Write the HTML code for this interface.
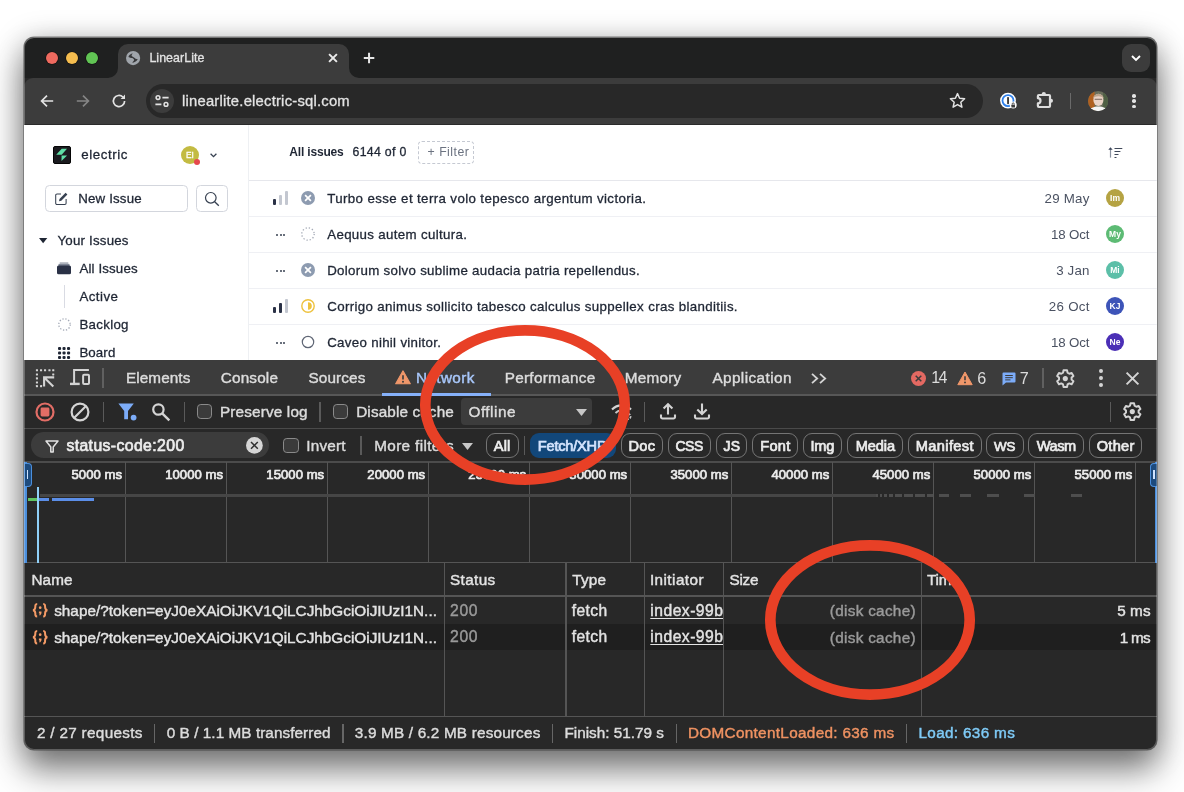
<!DOCTYPE html>
<html lang="en"><head><meta charset="utf-8"><title>LinearLite</title>
<style>
html,body{margin:0;padding:0;}
body{width:1184px;height:792px;background:#fff;overflow:hidden;position:relative;font-family:"Liberation Sans",sans-serif;}
#win{position:absolute;left:24px;top:37px;width:1132.5px;height:713px;border-radius:10px;overflow:hidden;background:#282828;}
#shadow{position:absolute;left:24px;top:37px;width:1132.5px;height:713px;border-radius:10px;box-shadow:0 0 0 0.6px rgba(0,0,0,.45),0 21px 34px rgba(0,0,0,.45),0 4px 30px rgba(0,0,0,.28);}
#rim{position:absolute;left:24px;top:37px;width:1132.5px;height:713px;border-radius:10px;box-shadow:inset 0 0 0 1px rgba(255,255,255,.25),inset 0 1px 0 rgba(255,255,255,.18);pointer-events:none;}
#in{will-change:transform;position:absolute;left:-24px;top:-37px;width:1184px;height:792px;}
.t{position:absolute;white-space:pre;}
.m{-webkit-text-stroke:0.3px;}
.d{-webkit-text-stroke:0.42px;}
.mm{-webkit-text-stroke:0.7px;}
svg{overflow:visible;}
</style></head>
<body>
<div id="shadow"></div>
<div id="win"><div id="in">
<div style="position:absolute;left:24.0px;top:37.0px;width:1133.0px;height:41.0px;background:#1f2020;"></div>
<div style="position:absolute;left:24.0px;top:78.0px;width:1133.0px;height:47.0px;background:#3c3c3c;border-radius:9px 9px 0 0;"></div>
<div style="position:absolute;left:24.0px;top:124.0px;width:1133.0px;height:1.0px;background:#2a2a2a;"></div>
<div style="position:absolute;left:117.5px;top:44.0px;width:231.5px;height:34.0px;background:#3c3c3c;border-radius:10px 10px 0 0;"></div>
<svg style="position:absolute;left:107.5px;top:68px" width="10" height="10"><path d="M10 0V10H0A10 10 0 0 0 10 0Z" fill="#3c3c3c"/></svg>
<svg style="position:absolute;left:349px;top:68px" width="10" height="10"><path d="M0 0V10H10A10 10 0 0 1 0 0Z" fill="#3c3c3c"/></svg>
<div style="position:absolute;left:45.8px;top:52.1px;width:12.4px;height:12.4px;background:#ee6a5f;border-radius:50%;box-shadow:0 0 0 0.6px rgba(0,0,0,.55);"></div>
<div style="position:absolute;left:65.8px;top:52.1px;width:12.4px;height:12.4px;background:#f5bd4f;border-radius:50%;box-shadow:0 0 0 0.6px rgba(0,0,0,.55);"></div>
<div style="position:absolute;left:85.8px;top:52.1px;width:12.4px;height:12.4px;background:#61c454;border-radius:50%;box-shadow:0 0 0 0.6px rgba(0,0,0,.55);"></div>
<svg style="position:absolute;left:125.9px;top:50.9px;" width="14.2" height="14.2" viewBox="0 0 14.2 14.2"><circle cx="7.1" cy="7.1" r="7.1" fill="#a0a5ab"/><path d="M6.400 2.300C4.500 3 2.800 4.400 2.400 6L5 7C6.500 6.800 7.500 7.500 8 8.500 8.500 9.500 7 10.500 6.300 11.700 8 11.700 10.500 10.500 11.800 8.200 10 8.200 9 7 8 6.400 7 5.600 5.500 5.500 5.600 4.500 5.700 3.500 6.800 3 6.400 2.300Z" fill="#38393b"/></svg>
<span id="t0" class="t m" style="top:49.9px;font-size:12.4px;line-height:16px;color:#e3e3e3;left:149.4px;letter-spacing:0.063px;">LinearLite</span>
<svg style="position:absolute;left:328.0px;top:53.0px;" width="10" height="10" viewBox="0 0 10 10"><path d="M1.100 1.100 8.900 8.900M8.900 1.100 1.100 8.900" stroke="#eaeaea" stroke-width="2" fill="none"/></svg>
<svg style="position:absolute;left:363.0px;top:52.0px;" width="12" height="12" viewBox="0 0 12 12"><path d="M6.050 0.800V11.200M0.800 6H11.300" stroke="#e6e6e6" stroke-width="2" fill="none"/></svg>
<div style="position:absolute;left:1122.0px;top:44.0px;width:28.0px;height:28.0px;background:#3c3c3c;border-radius:9px;"></div>
<svg style="position:absolute;left:1131.0px;top:55.0px;" width="10" height="7" viewBox="0 0 10 7"><path d="M1 1 5 5 9 1" stroke="#fff" stroke-width="1.9" fill="none"/></svg>
<svg style="position:absolute;left:40.0px;top:94.0px;" width="14" height="14" viewBox="0 0 14 14"><path d="M13.2 7H2M7 1.6 1.600 7 7 12.4" stroke="#e3e3e3" stroke-width="1.700" fill="none"/></svg>
<svg style="position:absolute;left:76.0px;top:94.0px;" width="14" height="14" viewBox="0 0 14 14"><path d="M0.800 7H12M7 1.600 12.400 7 7 12.400" stroke="#858585" stroke-width="1.700" fill="none"/></svg>
<svg style="position:absolute;left:111.0px;top:93.0px;" width="16" height="16" viewBox="0 0 16 16"><path d="M13.6 8A5.6 5.6 0 1 1 11.9 4" stroke="#e3e3e3" stroke-width="1.7" fill="none"/><path d="M14 1.6V6H9.6Z" fill="#e3e3e3"/></svg>
<div style="position:absolute;left:146.0px;top:84.0px;width:837.0px;height:34.0px;background:#282828;border-radius:17px;"></div>
<div style="position:absolute;left:149.8px;top:89.0px;width:24.0px;height:24.0px;background:#3c3c3c;border-radius:12px;"></div>
<svg style="position:absolute;left:155.0px;top:95.0px;" width="14" height="12" viewBox="0 0 14 12"><circle cx="3" cy="2.6" r="1.9" fill="none" stroke="#e3e3e3" stroke-width="1.5"/><path d="M7.4 2.6H13.6M0.4 9.4H6.4" stroke="#e3e3e3" stroke-width="1.6"/><circle cx="11" cy="9.4" r="1.9" fill="none" stroke="#e3e3e3" stroke-width="1.5"/></svg>
<span id="t1" class="t m" style="top:91.8px;font-size:14.8px;line-height:18px;color:#e3e3e3;left:182.0px;letter-spacing:0.219px;">linearlite.electric-sql.com</span>
<svg style="position:absolute;left:949.3px;top:91.8px;" width="17" height="17" viewBox="0 0 17 17"><path d="M8.5 1.6 10.6 6.3 15.6 6.8 11.8 10.2 12.9 15.2 8.5 12.6 4.1 15.2 5.2 10.2 1.4 6.8 6.4 6.3Z" fill="none" stroke="#e3e3e3" stroke-width="1.5" stroke-linejoin="round"/></svg>
<svg style="position:absolute;left:999.2px;top:92.3px;" width="19" height="19" viewBox="0 0 19 19"><circle cx="9" cy="8.600" r="7.900" fill="#fff"/><circle cx="9" cy="8.600" r="5.500" fill="none" stroke="#2f80ea" stroke-width="1.800"/><rect x="8.100" y="5" width="1.900" height="7.200" rx="0.700" fill="#3c3c3c"/><circle cx="14.200" cy="13" r="3.500" fill="#fff"/><rect x="12.400" y="12.700" width="3.600" height="2.800" rx="0.500" fill="#3c3c3c"/><path d="M13.200 12.700V11.900A1 1 0 0 1 15.200 11.900V12.700" fill="none" stroke="#3c3c3c" stroke-width="0.900"/></svg>
<svg style="position:absolute;left:1032.0px;top:88.0px;" width="26" height="24" viewBox="0 0 26 24"><path d="M5.900 10.200V8A1 1 0 0 1 6.900 7H17A1 1 0 0 1 18 8V18A1 1 0 0 1 17 19H6.900A1 1 0 0 1 5.900 18V15.400A2.600 2.600 0 0 0 5.900 10.200Z" fill="none" stroke="#dedede" stroke-width="2.200" stroke-linejoin="round"/><path d="M9.700 6.100A2.100 2.100 0 0 1 13.900 6.100Z" fill="#dedede"/><path d="M19 10.700A2 2 0 0 1 19 14.700Z" fill="#dedede"/></svg>
<div style="position:absolute;left:1070.2px;top:93.2px;width:1.3px;height:15.5px;background:#6a6a6a;"></div>
<svg style="position:absolute;left:1087.6px;top:91.1px;" width="20.2" height="20.2" viewBox="0 0 20 20"><defs><clipPath id="pa"><circle cx="10" cy="10" r="10"/></clipPath></defs><g clip-path="url(#pa)"><rect width="20" height="20" fill="#6a6f5c"/><rect x="0" y="0" width="6.500" height="20" fill="#b0601f"/><rect x="15" y="0" width="5" height="20" fill="#4f6044"/><ellipse cx="10.300" cy="8.800" rx="5" ry="6" fill="#ead3c6"/><path d="M5.100 7.400C5.100 1.400 15.500 1.400 15.500 7.400 13.600 4.600 7 4.600 5.100 7.400Z" fill="#b9a48e"/><path d="M6.600 8.200H14" stroke="#5b4d45" stroke-width="0.800"/><path d="M1 20C2 13.800 18.500 13.800 19.500 20Z" fill="#f5f5f5"/></g></svg>
<div style="position:absolute;left:1132.2px;top:94.2px;width:3.5px;height:3.5px;background:#e3e3e3;border-radius:50%;"></div>
<div style="position:absolute;left:1132.2px;top:99.3px;width:3.5px;height:3.5px;background:#e3e3e3;border-radius:50%;"></div>
<div style="position:absolute;left:1132.2px;top:104.5px;width:3.5px;height:3.5px;background:#e3e3e3;border-radius:50%;"></div>
<div style="position:absolute;left:24.0px;top:125.0px;width:1133.0px;height:235.0px;background:#fff;"></div>
<div style="position:absolute;left:248.0px;top:125.0px;width:1.0px;height:235.0px;background:#eef0f3;"></div>
<div style="position:absolute;left:53.2px;top:146.3px;width:17.6px;height:17.5px;background:#1b1b1f;box-sizing:border-box;border:1.400px solid #050505;border-radius:2px;"></div>
<svg style="position:absolute;left:53.2px;top:146.3px;" width="17.6" height="17.5" viewBox="0 0 17.6 17.5"><path d="M8.700 2.700H14L8.700 8.800H3.200Z" fill="#5fdfa6"/><path d="M8.600 9.400H14.100L8.500 14.900Z" fill="#5fdfa6"/></svg>
<span id="t2" class="t m" style="top:146.3px;font-size:13.3px;line-height:17px;color:#1f2634;left:81.3px;letter-spacing:0.569px;">electric</span>
<div style="position:absolute;left:181.0px;top:146.0px;width:18.0px;height:18.0px;background:#c3bb42;border-radius:50%;"></div>
<span id="t3" class="t m" style="top:150.0px;font-size:8.4px;line-height:10px;color:#fff;left:180.0px;width:20px;text-align:center;">EI</span>
<div style="position:absolute;left:193.6px;top:158.6px;width:6.5px;height:6.5px;background:#e5484d;border-radius:50%;"></div>
<svg style="position:absolute;left:209.8px;top:152.7px;" width="7" height="5" viewBox="0 0 7 5"><path d="M0.600 0.800 3.500 3.700 6.400 0.800" stroke="#374151" stroke-width="1.300" fill="none"/></svg>
<div style="position:absolute;left:45.2px;top:184.6px;width:142.8px;height:27.6px;background:#fff;box-sizing:border-box;border:1px solid #d3d6dd;border-radius:4.500px;"></div>
<div style="position:absolute;left:196.2px;top:184.6px;width:31.8px;height:27.6px;background:#fff;box-sizing:border-box;border:1px solid #d3d6dd;border-radius:4.500px;"></div>
<svg style="position:absolute;left:54.0px;top:191.5px;" width="14" height="14" viewBox="0 0 14 14"><path d="M7 2H3A1.300 1.300 0 0 0 1.700 3.300V11.200A1.300 1.300 0 0 0 3 12.500H10.800A1.300 1.300 0 0 0 12.100 11.200V7" fill="none" stroke="#374151" stroke-width="1.050"/><path d="M11.600 0.800 13.400 2.600 7.300 8.700 5 9.200 5.500 6.900Z" fill="#374151"/></svg>
<span id="t4" class="t m" style="top:190.1px;font-size:13.3px;line-height:17px;color:#1f2634;left:78.3px;letter-spacing:0.153px;">New Issue</span>
<svg style="position:absolute;left:204.0px;top:190.5px;" width="16" height="16" viewBox="0 0 16 16"><circle cx="6.8" cy="6.8" r="5.3" fill="none" stroke="#374151" stroke-width="1.2"/><path d="M10.700 10.700 14.800 14.800" stroke="#374151" stroke-width="1.3"/></svg>
<svg style="position:absolute;left:38.8px;top:237.6px;" width="8.3" height="5.2" viewBox="0 0 8.3 5.2"><path d="M0 0H8.300L4.150 5.200Z" fill="#1f2634"/></svg>
<span id="t5" class="t m" style="top:232.3px;font-size:13.3px;line-height:17px;color:#1f2634;left:57.5px;letter-spacing:0.201px;">Your Issues</span>
<svg style="position:absolute;left:57.0px;top:261.0px;" width="14" height="14" viewBox="0 0 14 14"><path d="M2.700 1.200H11.300V3.500H2.700Z" fill="#b3b7c0"/><path d="M1.500 2.900H12.500V5H1.500Z" fill="#7f8696"/><rect x="0" y="4.400" width="14" height="8.800" rx="1.500" fill="#2a3146"/></svg>
<span id="t6" class="t m" style="top:260.2px;font-size:13.3px;line-height:17px;color:#1f2634;left:79.4px;letter-spacing:0.143px;">All Issues</span>
<div style="position:absolute;left:64.3px;top:285.0px;width:1.0px;height:23.0px;background:#d9dbe3;"></div>
<span id="t7" class="t m" style="top:288.2px;font-size:13.3px;line-height:17px;color:#1f2634;left:79.4px;letter-spacing:0.456px;">Active</span>
<svg style="position:absolute;left:57.5px;top:318.0px;" width="13" height="13" viewBox="0 0 13 13"><circle cx="6.500" cy="6.500" r="5.700" fill="none" stroke="#a3a9b6" stroke-width="1.300" stroke-dasharray="1.3 1.700"/></svg>
<span id="t8" class="t m" style="top:316.4px;font-size:13.3px;line-height:17px;color:#1f2634;left:79.4px;letter-spacing:0.298px;">Backlog</span>
<svg style="position:absolute;left:58.0px;top:346.5px;" width="12" height="12" viewBox="0 0 12 12"><rect x="0.0" y="0.0" width="3.100" height="3.100" rx="1.100" fill="#1f2634"/><rect x="0.0" y="4.5" width="3.100" height="3.100" rx="1.100" fill="#1f2634"/><rect x="0.0" y="9.0" width="3.100" height="3.100" rx="1.100" fill="#1f2634"/><rect x="4.5" y="0.0" width="3.100" height="3.100" rx="1.100" fill="#1f2634"/><rect x="4.5" y="4.5" width="3.100" height="3.100" rx="1.100" fill="#1f2634"/><rect x="4.5" y="9.0" width="3.100" height="3.100" rx="1.100" fill="#1f2634"/><rect x="9.0" y="0.0" width="3.100" height="3.100" rx="1.100" fill="#1f2634"/><rect x="9.0" y="4.5" width="3.100" height="3.100" rx="1.100" fill="#1f2634"/><rect x="9.0" y="9.0" width="3.100" height="3.100" rx="1.100" fill="#1f2634"/></svg>
<span id="t9" class="t m" style="top:344.0px;font-size:13.3px;line-height:17px;color:#1f2634;left:79.4px;letter-spacing:0.101px;">Board</span>
<span id="t10" class="t" style="top:145.0px;font-size:12px;line-height:15px;color:#1f2634;left:289.3px;font-weight:700;letter-spacing:-0.181px;">All issues</span>
<span id="t11" class="t m" style="top:145.0px;font-size:12.3px;line-height:15px;color:#1f2634;left:352.6px;letter-spacing:0.300px;">6144 of 0</span>
<div style="position:absolute;left:418.2px;top:140.6px;width:55.8px;height:23.8px;background:#fff;box-sizing:border-box;border:1px dashed #c5c9d2;border-radius:4px;"></div>
<span id="t12" class="t" style="top:145.0px;font-size:12.3px;line-height:15px;color:#6b7280;left:427.6px;letter-spacing:0.467px;">+ Filter</span>
<svg style="position:absolute;left:1108.4px;top:147.0px;" width="16" height="12" viewBox="0 0 16 12"><path d="M2.500 10.600V2" stroke="#8b93a1" stroke-width="1.200" fill="none"/><path d="M0.300 2.700 2.500 0.200 4.700 2.700Z" fill="#3b4559"/><path d="M6.500 1.500H14.300M6.500 4.500H12.400M6.500 7.500H10.500M6.500 10.500H8.500" stroke="#3f4859" stroke-width="1.100"/></svg>
<div style="position:absolute;left:249.0px;top:180.0px;width:908.0px;height:1.0px;background:#e6e7ec;"></div>
<div style="position:absolute;left:249.0px;top:216.0px;width:908.0px;height:1.0px;background:#eff0f4;"></div>
<div style="position:absolute;left:273.3px;top:199.0px;width:3.2px;height:6.0px;background:#2a3146;border-radius:1px;"></div>
<div style="position:absolute;left:278.9px;top:195.2px;width:3.3px;height:9.8px;background:#c3c7d0;border-radius:1px;"></div>
<div style="position:absolute;left:284.5px;top:191.4px;width:3.4px;height:13.6px;background:#c3c7d0;border-radius:1px;"></div>
<svg style="position:absolute;left:301.0px;top:191.3px;" width="14" height="14" viewBox="0 0 14 14"><circle cx="7" cy="7" r="7" fill="#8d9bb0"/><path d="M4.100 4.100 9.900 9.900M9.900 4.100 4.100 9.900" stroke="#fff" stroke-width="1.700"/></svg>
<span id="t13" class="t m" style="top:189.8px;font-size:13.3px;line-height:17px;color:#1f2634;left:327.2px;letter-spacing:0.382px;">Turbo esse et terra volo tepesco argentum victoria.</span>
<span id="t14" class="t" style="top:189.8px;font-size:13.3px;line-height:17px;color:#4b5262;left:1044.6px;letter-spacing:0.238px;">29 May</span>
<div style="position:absolute;left:1106.0px;top:189.1px;width:18.0px;height:18.0px;background:#b5a343;border-radius:50%;"></div>
<span id="t15" class="t" style="top:193.1px;font-size:8.5px;line-height:11px;color:#fff;left:1105.0px;font-weight:700;width:20px;text-align:center;">Im</span>
<div style="position:absolute;left:249.0px;top:252.0px;width:908.0px;height:1.0px;background:#eff0f4;"></div>
<div style="position:absolute;left:276.2px;top:234.1px;width:2.0px;height:2.0px;background:#374151;border-radius:50%;"></div>
<div style="position:absolute;left:279.5px;top:234.1px;width:2.0px;height:2.0px;background:#374151;border-radius:50%;"></div>
<div style="position:absolute;left:282.8px;top:234.1px;width:2.0px;height:2.0px;background:#374151;border-radius:50%;"></div>
<svg style="position:absolute;left:301.0px;top:227.3px;" width="14" height="14" viewBox="0 0 14 14"><circle cx="7" cy="7" r="6.200" fill="none" stroke="#a3a9b5" stroke-width="1.300" stroke-dasharray="1.3 1.950"/></svg>
<span id="t16" class="t m" style="top:225.8px;font-size:13.3px;line-height:17px;color:#1f2634;left:327.2px;letter-spacing:0.337px;">Aequus autem cultura.</span>
<span id="t17" class="t" style="top:225.8px;font-size:13.3px;line-height:17px;color:#4b5262;left:1050.9px;letter-spacing:-0.135px;">18 Oct</span>
<div style="position:absolute;left:1106.0px;top:225.1px;width:18.0px;height:18.0px;background:#5dbb74;border-radius:50%;"></div>
<span id="t18" class="t" style="top:229.1px;font-size:8.5px;line-height:11px;color:#fff;left:1105.0px;font-weight:700;width:20px;text-align:center;">My</span>
<div style="position:absolute;left:249.0px;top:288.0px;width:908.0px;height:1.0px;background:#eff0f4;"></div>
<div style="position:absolute;left:276.2px;top:270.1px;width:2.0px;height:2.0px;background:#374151;border-radius:50%;"></div>
<div style="position:absolute;left:279.5px;top:270.1px;width:2.0px;height:2.0px;background:#374151;border-radius:50%;"></div>
<div style="position:absolute;left:282.8px;top:270.1px;width:2.0px;height:2.0px;background:#374151;border-radius:50%;"></div>
<svg style="position:absolute;left:301.0px;top:263.3px;" width="14" height="14" viewBox="0 0 14 14"><circle cx="7" cy="7" r="7" fill="#8d9bb0"/><path d="M4.100 4.100 9.900 9.900M9.900 4.100 4.100 9.900" stroke="#fff" stroke-width="1.700"/></svg>
<span id="t19" class="t m" style="top:261.8px;font-size:13.3px;line-height:17px;color:#1f2634;left:327.2px;letter-spacing:0.305px;">Dolorum solvo sublime audacia patria repellendus.</span>
<span id="t20" class="t" style="top:261.8px;font-size:13.3px;line-height:17px;color:#4b5262;left:1056.2px;letter-spacing:0.166px;">3 Jan</span>
<div style="position:absolute;left:1106.0px;top:261.1px;width:18.0px;height:18.0px;background:#5cbfa8;border-radius:50%;"></div>
<span id="t21" class="t" style="top:265.1px;font-size:8.5px;line-height:11px;color:#fff;left:1105.0px;font-weight:700;width:20px;text-align:center;">Mi</span>
<div style="position:absolute;left:249.0px;top:324.0px;width:908.0px;height:1.0px;background:#eff0f4;"></div>
<div style="position:absolute;left:273.3px;top:307.0px;width:3.2px;height:6.0px;background:#2a3146;border-radius:1px;"></div>
<div style="position:absolute;left:278.9px;top:303.2px;width:3.3px;height:9.8px;background:#2a3146;border-radius:1px;"></div>
<div style="position:absolute;left:284.5px;top:299.4px;width:3.4px;height:13.6px;background:#c3c7d0;border-radius:1px;"></div>
<svg style="position:absolute;left:301.0px;top:299.3px;" width="14" height="14" viewBox="0 0 14 14"><circle cx="7" cy="7" r="6.200" fill="none" stroke="#eec23e" stroke-width="1.400"/><path d="M7 3.200A3.800 3.800 0 0 1 7 10.800Z" fill="#eec23e"/></svg>
<span id="t22" class="t m" style="top:297.8px;font-size:13.3px;line-height:17px;color:#1f2634;left:327.2px;letter-spacing:0.345px;">Corrigo animus sollicito tabesco calculus suppellex cras blanditiis.</span>
<span id="t23" class="t" style="top:297.8px;font-size:13.3px;line-height:17px;color:#4b5262;left:1048.8px;letter-spacing:0.286px;">26 Oct</span>
<div style="position:absolute;left:1106.0px;top:297.1px;width:18.0px;height:18.0px;background:#3d54b8;border-radius:50%;"></div>
<span id="t24" class="t" style="top:301.1px;font-size:8.5px;line-height:11px;color:#fff;left:1105.0px;font-weight:700;width:20px;text-align:center;">KJ</span>
<div style="position:absolute;left:276.2px;top:342.1px;width:2.0px;height:2.0px;background:#374151;border-radius:50%;"></div>
<div style="position:absolute;left:279.5px;top:342.1px;width:2.0px;height:2.0px;background:#374151;border-radius:50%;"></div>
<div style="position:absolute;left:282.8px;top:342.1px;width:2.0px;height:2.0px;background:#374151;border-radius:50%;"></div>
<svg style="position:absolute;left:301.0px;top:335.3px;" width="14" height="14" viewBox="0 0 14 14"><circle cx="7" cy="7" r="5.700" fill="none" stroke="#5f6675" stroke-width="1.200"/></svg>
<span id="t25" class="t m" style="top:333.8px;font-size:13.3px;line-height:17px;color:#1f2634;left:327.2px;letter-spacing:0.310px;">Caveo nihil vinitor.</span>
<span id="t26" class="t" style="top:333.8px;font-size:13.3px;line-height:17px;color:#4b5262;left:1050.9px;letter-spacing:-0.135px;">18 Oct</span>
<div style="position:absolute;left:1106.0px;top:333.1px;width:18.0px;height:18.0px;background:#4b2fb6;border-radius:50%;"></div>
<span id="t27" class="t" style="top:337.1px;font-size:8.5px;line-height:11px;color:#fff;left:1105.0px;font-weight:700;width:20px;text-align:center;">Ne</span>
<div style="position:absolute;left:24.0px;top:360.0px;width:1133.0px;height:390.0px;background:#282828;"></div>
<div style="position:absolute;left:24.0px;top:360.0px;width:1133.0px;height:35.0px;background:#3c3c3c;"></div>
<div style="position:absolute;left:24.0px;top:394.0px;width:1133.0px;height:2.0px;background:#575757;"></div>
<div style="position:absolute;left:24.0px;top:427.9px;width:1133.0px;height:1.5px;background:#4a4a4a;"></div>
<div style="position:absolute;left:24.0px;top:461.2px;width:1133.0px;height:1.7px;background:#4c4c4c;"></div>
<svg style="position:absolute;left:35.8px;top:368.8px;" width="19" height="18.5" viewBox="0 0 19 18.5"><rect x="-0.1" y="0.2" width="2.100" height="2.100" rx="0.400" fill="#d4d4d4"/><rect x="4.0" y="0.2" width="2.100" height="2.100" rx="0.400" fill="#d4d4d4"/><rect x="8.0" y="0.2" width="2.100" height="2.100" rx="0.400" fill="#d4d4d4"/><rect x="12.4" y="0.2" width="2.100" height="2.100" rx="0.400" fill="#d4d4d4"/><rect x="16.2" y="0.2" width="2.100" height="2.100" rx="0.400" fill="#d4d4d4"/><rect x="-0.1" y="4.4" width="2.100" height="2.100" rx="0.400" fill="#d4d4d4"/><rect x="-0.1" y="8.3" width="2.100" height="2.100" rx="0.400" fill="#d4d4d4"/><rect x="-0.1" y="12.4" width="2.100" height="2.100" rx="0.400" fill="#d4d4d4"/><rect x="-0.1" y="16.1" width="2.100" height="2.100" rx="0.400" fill="#d4d4d4"/><rect x="16.2" y="4.4" width="2.100" height="2.100" rx="0.400" fill="#d4d4d4"/><rect x="4.0" y="16.1" width="2.100" height="2.100" rx="0.400" fill="#d4d4d4"/><path d="M18.200 8.400H8.100V17.400M8.400 8.700 17.300 17.400" stroke="#d4d4d4" stroke-width="2.100" fill="none"/></svg>
<svg style="position:absolute;left:69.9px;top:369.4px;" width="21" height="17" viewBox="0 0 21 17"><path d="M4.100 14V1H18.900" stroke="#d4d4d4" stroke-width="2" fill="none"/><path d="M0 14.900H9.700" stroke="#d4d4d4" stroke-width="2.400"/><rect x="13.100" y="5.800" width="5.900" height="9.200" rx="1" fill="none" stroke="#d4d4d4" stroke-width="2"/></svg>
<div style="position:absolute;left:102.4px;top:368.4px;width:1.4px;height:19.4px;background:#606060;"></div>
<span id="t28" class="t d" style="top:368.4px;font-size:15.3px;line-height:19px;color:#dcdcdc;left:126.0px;letter-spacing:0.075px;">Elements</span>
<span id="t29" class="t d" style="top:368.4px;font-size:15.3px;line-height:19px;color:#dcdcdc;left:220.7px;letter-spacing:0.194px;">Console</span>
<span id="t30" class="t d" style="top:368.4px;font-size:15.3px;line-height:19px;color:#dcdcdc;left:308.4px;letter-spacing:0.146px;">Sources</span>
<span id="t31" class="t d" style="top:368.4px;font-size:15.3px;line-height:19px;color:#a8c7fa;left:416.0px;letter-spacing:0.366px;">Network</span>
<span id="t32" class="t d" style="top:368.4px;font-size:15.3px;line-height:19px;color:#dcdcdc;left:504.7px;letter-spacing:0.293px;">Performance</span>
<span id="t33" class="t d" style="top:368.4px;font-size:15.3px;line-height:19px;color:#dcdcdc;left:624.7px;letter-spacing:0.249px;">Memory</span>
<span id="t34" class="t d" style="top:368.4px;font-size:15.3px;line-height:19px;color:#dcdcdc;left:712.4px;letter-spacing:0.416px;">Application</span>
<div style="position:absolute;left:381.5px;top:393.3px;width:109.4px;height:2.7px;background:#86b1fa;"></div>
<svg style="position:absolute;left:394.8px;top:370.0px;" width="16" height="14.7" viewBox="0 0 15 14"><path d="M7.500 0.800 14.500 13.200H0.500Z" fill="#f0976a" stroke="#f0976a" stroke-width="1" stroke-linejoin="round"/><path d="M7.500 5V9" stroke="#3c3c3c" stroke-width="1.600"/><circle cx="7.500" cy="11.200" r="0.950" fill="#3c3c3c"/></svg>
<svg style="position:absolute;left:811.0px;top:372.5px;" width="16" height="11" viewBox="0 0 16 11"><path d="M1 0.800 6.200 5.500 1 10.200M9 0.800 14.200 5.500 9 10.200" stroke="#d4d4d4" stroke-width="1.800" fill="none"/></svg>
<svg style="position:absolute;left:910.5px;top:371.0px;" width="15" height="15" viewBox="0 0 15 15"><circle cx="7.500" cy="7.500" r="7.500" fill="#e46962"/><path d="M4.700 4.700 10.300 10.300M10.300 4.700 4.700 10.300" stroke="#3c3c3c" stroke-width="1.500"/></svg>
<span id="t35" class="t" style="top:368.3px;font-size:16px;line-height:20px;color:#dcdcdc;left:931.2px;letter-spacing:-1.604px;">14</span>
<svg style="position:absolute;left:956.5px;top:370.8px;" width="16" height="14.5" viewBox="0 0 16 14.5"><path d="M8 1 15.200 13.700H0.800Z" fill="#f0976a" stroke="#f0976a" stroke-width="1" stroke-linejoin="round"/><path d="M8 5.200V9.200" stroke="#3c3c3c" stroke-width="1.600"/><circle cx="8" cy="11.400" r="0.950" fill="#3c3c3c"/></svg>
<span id="t36" class="t" style="top:368.3px;font-size:16.2px;line-height:20px;color:#dcdcdc;left:977.2px;">6</span>
<svg style="position:absolute;left:1001.5px;top:371.5px;" width="14" height="14" viewBox="0 0 14 14"><path d="M1.500 0.500H12.500A1 1 0 0 1 13.500 1.500V9.500A1 1 0 0 1 12.500 10.500H4L0.500 13.500V1.500A1 1 0 0 1 1.500 0.500Z" fill="#7cacf8"/><path d="M3.200 3.500H10.800M3.200 5.700H10.800M3.200 7.900H8.500" stroke="#3c3c3c" stroke-width="1"/></svg>
<span id="t37" class="t" style="top:368.3px;font-size:16.2px;line-height:20px;color:#dcdcdc;left:1019.8px;">7</span>
<div style="position:absolute;left:1042.2px;top:368.4px;width:1.4px;height:19.4px;background:#606060;"></div>
<svg style="position:absolute;left:1055.4px;top:368.5px;" width="20.6" height="19.2" viewBox="0 0 20 18.6"><g fill="none" stroke="#d4d4d4" stroke-width="1.900"><path d="M8.300 1.200H11.700L12.200 3.600 13.900 4.600 16.200 3.800 17.900 6.700 16.100 8.300V10.300L17.900 11.900 16.200 14.800 13.900 14 12.200 15 11.700 17.400H8.300L7.800 15 6.100 14 3.800 14.800 2.100 11.900 3.900 10.300V8.300L2.100 6.700 3.800 3.800 6.100 4.600 7.800 3.600Z" stroke-linejoin="round"/><circle cx="10" cy="9.300" r="2.500" fill="#d4d4d4" stroke="none"/></g></svg>
<div style="position:absolute;left:1098.9px;top:369.4px;width:3.8px;height:3.8px;background:#d4d4d4;border-radius:50%;"></div>
<div style="position:absolute;left:1098.9px;top:376.1px;width:3.8px;height:3.8px;background:#d4d4d4;border-radius:50%;"></div>
<div style="position:absolute;left:1098.9px;top:382.8px;width:3.8px;height:3.8px;background:#d4d4d4;border-radius:50%;"></div>
<svg style="position:absolute;left:1125.7px;top:371.5px;" width="13" height="13" viewBox="0 0 13 13"><path d="M0.600 0.600 12.400 12.400M12.400 0.600 0.600 12.400" stroke="#d4d4d4" stroke-width="2"/></svg>
<svg style="position:absolute;left:35.0px;top:401.5px;" width="20" height="20" viewBox="0 0 20 20"><circle cx="10" cy="10" r="8.500" fill="none" stroke="#e26d66" stroke-width="2.200"/><rect x="5.600" y="5.600" width="8.800" height="8.800" rx="1.400" fill="#e26d66"/></svg>
<svg style="position:absolute;left:70.0px;top:401.5px;" width="20" height="20" viewBox="0 0 20 20"><circle cx="10" cy="10" r="8.400" fill="none" stroke="#d4d4d4" stroke-width="2.200"/><path d="M4 16 16 4" stroke="#d4d4d4" stroke-width="2.200"/></svg>
<div style="position:absolute;left:102.6px;top:401.8px;width:1.4px;height:19.8px;background:#5a5a5a;"></div>
<svg style="position:absolute;left:118.2px;top:403.3px;" width="20" height="18" viewBox="0 0 20 18"><path d="M0.400 0.600H15.800L10 8V16.300H6.200V8Z" fill="#7cacf8"/><circle cx="15.600" cy="14.600" r="2.900" fill="#7cacf8"/></svg>
<svg style="position:absolute;left:152.0px;top:403.0px;" width="18" height="18" viewBox="0 0 18 18"><circle cx="6.400" cy="6.500" r="5.200" fill="none" stroke="#d4d4d4" stroke-width="2.200"/><path d="M10.200 10.300 17.300 17.300" stroke="#d4d4d4" stroke-width="2.400"/></svg>
<div style="position:absolute;left:183.7px;top:401.8px;width:1.4px;height:19.8px;background:#5a5a5a;"></div>
<div style="position:absolute;left:196.8px;top:403.7px;width:15.7px;height:15.7px;background:#3b3b3b;box-sizing:border-box;border:1.800px solid #8a8a8a;border-radius:3.800px;"></div>
<span id="t38" class="t d" style="top:402.0px;font-size:15.3px;line-height:19px;color:#dcdcdc;left:220.0px;letter-spacing:0.156px;">Preserve log</span>
<div style="position:absolute;left:319.3px;top:401.8px;width:1.4px;height:19.8px;background:#5a5a5a;"></div>
<div style="position:absolute;left:332.8px;top:403.7px;width:15.7px;height:15.7px;background:#3b3b3b;box-sizing:border-box;border:1.800px solid #8a8a8a;border-radius:3.800px;"></div>
<span id="t39" class="t d" style="top:402.0px;font-size:15.3px;line-height:19px;color:#dcdcdc;left:356.2px;letter-spacing:0.126px;">Disable cache</span>
<div style="position:absolute;left:461.0px;top:398.1px;width:131.0px;height:27.4px;background:#3c3c3c;border-radius:4px;"></div>
<span id="t40" class="t d" style="top:402.0px;font-size:15.3px;line-height:19px;color:#dcdcdc;left:468.5px;letter-spacing:0.492px;">Offline</span>
<svg style="position:absolute;left:576.0px;top:408.5px;" width="11" height="7" viewBox="0 0 11 7"><path d="M0 0H11L5.500 7Z" fill="#c7c7c7"/></svg>
<svg style="position:absolute;left:611.0px;top:401.5px;" width="22" height="20" viewBox="0 0 22 20"><path d="M1 7.500C6.500 2 14.500 2 20 7.500" stroke="#d4d4d4" stroke-width="2.100" fill="none"/><path d="M4.500 11C8 7.600 12 7.600 14 9" stroke="#c7c7c7" stroke-width="1.900" fill="none"/><circle cx="10.500" cy="15.500" r="1.600" fill="#c7c7c7"/><circle cx="17" cy="14.500" r="2.600" fill="none" stroke="#c7c7c7" stroke-width="1.700" stroke-dasharray="2 1.1"/></svg>
<div style="position:absolute;left:644.0px;top:401.8px;width:1.4px;height:19.8px;background:#5a5a5a;"></div>
<svg style="position:absolute;left:660.2px;top:403.2px;" width="16" height="17" viewBox="0 0 16 17"><path d="M8 11.600V1.400M3.600 5.600 8 1.200 12.400 5.600" stroke="#d4d4d4" stroke-width="2.100" fill="none"/><path d="M1 11.500V14A1.500 1.500 0 0 0 2.500 15.500H13.500A1.500 1.500 0 0 0 15 14V11.500" stroke="#d4d4d4" stroke-width="2.100" fill="none"/></svg>
<svg style="position:absolute;left:694.4px;top:403.2px;" width="16" height="17" viewBox="0 0 16 17"><path d="M8 0.400V10.800M3.300 6.400 8 11 12.700 6.400" stroke="#d4d4d4" stroke-width="2.100" fill="none"/><path d="M1 11.500V14A1.500 1.500 0 0 0 2.500 15.500H13.500A1.500 1.500 0 0 0 15 14V11.500" stroke="#d4d4d4" stroke-width="2.100" fill="none"/></svg>
<div style="position:absolute;left:1109.7px;top:401.8px;width:1.4px;height:19.8px;background:#5a5a5a;"></div>
<svg style="position:absolute;left:1121.9px;top:401.7px;" width="20.6" height="19.2" viewBox="0 0 20 18.6"><g fill="none" stroke="#d4d4d4" stroke-width="1.900"><path d="M8.300 1.200H11.700L12.200 3.600 13.900 4.600 16.200 3.800 17.900 6.700 16.100 8.300V10.300L17.900 11.900 16.200 14.800 13.900 14 12.200 15 11.700 17.400H8.300L7.800 15 6.100 14 3.800 14.800 2.100 11.900 3.900 10.300V8.300L2.100 6.700 3.800 3.800 6.100 4.600 7.800 3.600Z" stroke-linejoin="round"/><circle cx="10" cy="9.300" r="2.500" fill="#d4d4d4" stroke="none"/></g></svg>
<div style="position:absolute;left:31.4px;top:432.4px;width:237.5px;height:25.3px;background:#3c3c3c;border-radius:12.700px;"></div>
<svg style="position:absolute;left:44.5px;top:439.5px;" width="14" height="13" viewBox="0 0 14 13"><path d="M1 1H13L8.200 7V12H5.800V7Z" fill="none" stroke="#e3e3e3" stroke-width="1.500" stroke-linejoin="round"/></svg>
<span id="t41" class="t mm" style="top:435.5px;font-size:15.8px;line-height:20px;color:#ececec;left:66.4px;letter-spacing:0.385px;">status-code:200</span>
<svg style="position:absolute;left:245.6px;top:436.8px;" width="16.8" height="16.8" viewBox="0 0 16.8 16.8"><circle cx="8.400" cy="8.400" r="8.400" fill="#d6d6d6"/><path d="M5 5 11.800 11.800M11.800 5 5 11.800" stroke="#303030" stroke-width="1.500"/></svg>
<div style="position:absolute;left:283.3px;top:437.7px;width:15.7px;height:15.7px;background:#3b3b3b;box-sizing:border-box;border:1.800px solid #8a8a8a;border-radius:3.800px;"></div>
<span id="t42" class="t d" style="top:436.0px;font-size:15.3px;line-height:19px;color:#dcdcdc;left:306.3px;letter-spacing:0.207px;">Invert</span>
<div style="position:absolute;left:360.2px;top:435.5px;width:1.4px;height:19.8px;background:#5a5a5a;"></div>
<span id="t43" class="t d" style="top:436.0px;font-size:15.3px;line-height:19px;color:#dcdcdc;left:374.2px;letter-spacing:0.358px;">More filters</span>
<svg style="position:absolute;left:461.5px;top:442.5px;" width="11" height="7" viewBox="0 0 11 7"><path d="M0 0H11L5.500 7Z" fill="#c7c7c7"/></svg>
<div style="position:absolute;left:485.8px;top:433.2px;width:33.0px;height:24.7px;background:transparent;box-sizing:border-box;border:1.400px solid #747474;border-radius:9px;"></div>
<span id="t44" class="t mm" style="top:436.5px;font-size:14.6px;line-height:18px;color:#ececec;left:493.8px;letter-spacing:0.140px;">All</span>
<div style="position:absolute;left:529.6px;top:433.2px;width:86.6px;height:24.7px;background:#12477a;border-radius:9px;"></div>
<span id="t45" class="t mm" style="top:436.5px;font-size:14.6px;line-height:18px;color:#d3e3fd;left:537.8px;letter-spacing:-0.209px;">Fetch/XHR</span>
<div style="position:absolute;left:621.3px;top:433.2px;width:41.3px;height:24.7px;background:transparent;box-sizing:border-box;border:1.400px solid #747474;border-radius:9px;"></div>
<span id="t46" class="t mm" style="top:436.5px;font-size:14.6px;line-height:18px;color:#ececec;left:628.5px;letter-spacing:0.321px;">Doc</span>
<div style="position:absolute;left:667.6px;top:433.2px;width:43.1px;height:24.7px;background:transparent;box-sizing:border-box;border:1.400px solid #747474;border-radius:9px;"></div>
<span id="t47" class="t mm" style="top:437.6px;font-size:13.9px;line-height:17px;color:#ececec;left:675.4px;letter-spacing:-0.337px;">CSS</span>
<div style="position:absolute;left:715.8px;top:433.2px;width:31.7px;height:24.7px;background:transparent;box-sizing:border-box;border:1.400px solid #747474;border-radius:9px;"></div>
<span id="t48" class="t mm" style="top:437.6px;font-size:13.9px;line-height:17px;color:#ececec;left:723.5px;letter-spacing:0.281px;">JS</span>
<div style="position:absolute;left:752.3px;top:433.2px;width:45.3px;height:24.7px;background:transparent;box-sizing:border-box;border:1.400px solid #747474;border-radius:9px;"></div>
<span id="t49" class="t mm" style="top:436.5px;font-size:14.6px;line-height:18px;color:#ececec;left:760.3px;letter-spacing:0.229px;">Font</span>
<div style="position:absolute;left:802.7px;top:433.2px;width:39.7px;height:24.7px;background:transparent;box-sizing:border-box;border:1.400px solid #747474;border-radius:9px;"></div>
<span id="t50" class="t mm" style="top:436.5px;font-size:14.6px;line-height:18px;color:#ececec;left:810.4px;letter-spacing:-0.116px;">Img</span>
<div style="position:absolute;left:847.4px;top:433.2px;width:55.9px;height:24.7px;background:transparent;box-sizing:border-box;border:1.400px solid #747474;border-radius:9px;"></div>
<span id="t51" class="t mm" style="top:436.5px;font-size:14.6px;line-height:18px;color:#ececec;left:855.8px;letter-spacing:-0.138px;">Media</span>
<div style="position:absolute;left:907.6px;top:433.2px;width:74.2px;height:24.7px;background:transparent;box-sizing:border-box;border:1.400px solid #747474;border-radius:9px;"></div>
<span id="t52" class="t mm" style="top:436.5px;font-size:14.6px;line-height:18px;color:#ececec;left:915.8px;letter-spacing:0.362px;">Manifest</span>
<div style="position:absolute;left:986.1px;top:433.2px;width:37.6px;height:24.7px;background:transparent;box-sizing:border-box;border:1.400px solid #747474;border-radius:9px;"></div>
<span id="t53" class="t mm" style="top:437.6px;font-size:13.4px;line-height:17px;color:#ececec;left:994.0px;letter-spacing:-0.070px;">WS</span>
<div style="position:absolute;left:1028.1px;top:433.2px;width:56.1px;height:24.7px;background:transparent;box-sizing:border-box;border:1.400px solid #747474;border-radius:9px;"></div>
<span id="t54" class="t mm" style="top:436.5px;font-size:14.6px;line-height:18px;color:#ececec;left:1036.7px;letter-spacing:-0.438px;">Wasm</span>
<div style="position:absolute;left:1088.5px;top:433.2px;width:53.7px;height:24.7px;background:transparent;box-sizing:border-box;border:1.400px solid #747474;border-radius:9px;"></div>
<span id="t55" class="t mm" style="top:436.5px;font-size:14.6px;line-height:18px;color:#ececec;left:1096.7px;letter-spacing:0.274px;">Other</span>
<div style="position:absolute;left:523.6px;top:435.5px;width:1.4px;height:19.8px;background:#5a5a5a;"></div>
<div style="position:absolute;left:124.7px;top:462.0px;width:1.4px;height:101.0px;background:#555;"></div>
<span id="t56" class="t mm" style="top:466.8px;font-size:13.1px;line-height:16px;color:#ececec;right:1061.9px;letter-spacing:0.05px;">5000 ms</span>
<div style="position:absolute;left:225.7px;top:462.0px;width:1.4px;height:101.0px;background:#555;"></div>
<span id="t57" class="t mm" style="top:466.8px;font-size:13.1px;line-height:16px;color:#ececec;right:960.9px;letter-spacing:0.05px;">10000 ms</span>
<div style="position:absolute;left:326.8px;top:462.0px;width:1.4px;height:101.0px;background:#555;"></div>
<span id="t58" class="t mm" style="top:466.8px;font-size:13.1px;line-height:16px;color:#ececec;right:859.8px;letter-spacing:0.05px;">15000 ms</span>
<div style="position:absolute;left:427.8px;top:462.0px;width:1.4px;height:101.0px;background:#555;"></div>
<span id="t59" class="t mm" style="top:466.8px;font-size:13.1px;line-height:16px;color:#ececec;right:758.8px;letter-spacing:0.05px;">20000 ms</span>
<div style="position:absolute;left:528.8px;top:462.0px;width:1.4px;height:101.0px;background:#555;"></div>
<span id="t60" class="t mm" style="top:466.8px;font-size:13.1px;line-height:16px;color:#ececec;right:657.8px;letter-spacing:0.05px;">25000 ms</span>
<div style="position:absolute;left:629.8px;top:462.0px;width:1.4px;height:101.0px;background:#555;"></div>
<span id="t61" class="t mm" style="top:466.8px;font-size:13.1px;line-height:16px;color:#ececec;right:556.8px;letter-spacing:0.05px;">30000 ms</span>
<div style="position:absolute;left:730.9px;top:462.0px;width:1.4px;height:101.0px;background:#555;"></div>
<span id="t62" class="t mm" style="top:466.8px;font-size:13.1px;line-height:16px;color:#ececec;right:455.7px;letter-spacing:0.05px;">35000 ms</span>
<div style="position:absolute;left:831.9px;top:462.0px;width:1.4px;height:101.0px;background:#555;"></div>
<span id="t63" class="t mm" style="top:466.8px;font-size:13.1px;line-height:16px;color:#ececec;right:354.7px;letter-spacing:0.05px;">40000 ms</span>
<div style="position:absolute;left:932.9px;top:462.0px;width:1.4px;height:101.0px;background:#555;"></div>
<span id="t64" class="t mm" style="top:466.8px;font-size:13.1px;line-height:16px;color:#ececec;right:253.7px;letter-spacing:0.05px;">45000 ms</span>
<div style="position:absolute;left:1034.0px;top:462.0px;width:1.4px;height:101.0px;background:#555;"></div>
<span id="t65" class="t mm" style="top:466.8px;font-size:13.1px;line-height:16px;color:#ececec;right:152.6px;letter-spacing:0.05px;">50000 ms</span>
<div style="position:absolute;left:1135.0px;top:462.0px;width:1.4px;height:101.0px;background:#555;"></div>
<span id="t66" class="t mm" style="top:466.8px;font-size:13.1px;line-height:16px;color:#ececec;right:51.6px;letter-spacing:0.05px;">55000 ms</span>
<div style="position:absolute;left:39.5px;top:493.8px;width:836.5px;height:3.0px;background:#464646;"></div>
<div style="position:absolute;left:876.0px;top:493.5px;width:2.0px;height:3.0px;background:#4e4e4e;"></div>
<div style="position:absolute;left:880.0px;top:493.5px;width:2.0px;height:3.0px;background:#4e4e4e;"></div>
<div style="position:absolute;left:884.0px;top:493.5px;width:3.0px;height:3.0px;background:#4e4e4e;"></div>
<div style="position:absolute;left:889.0px;top:493.5px;width:4.0px;height:3.0px;background:#4e4e4e;"></div>
<div style="position:absolute;left:895.0px;top:493.5px;width:7.0px;height:3.0px;background:#4e4e4e;"></div>
<div style="position:absolute;left:904.0px;top:493.5px;width:9.0px;height:3.0px;background:#4e4e4e;"></div>
<div style="position:absolute;left:915.0px;top:493.5px;width:10.0px;height:3.0px;background:#4e4e4e;"></div>
<div style="position:absolute;left:927.0px;top:493.5px;width:6.0px;height:3.0px;background:#4e4e4e;"></div>
<div style="position:absolute;left:938.5px;top:493.5px;width:10.5px;height:3.0px;background:#4e4e4e;"></div>
<div style="position:absolute;left:959.6px;top:493.5px;width:11.1px;height:3.0px;background:#4e4e4e;"></div>
<div style="position:absolute;left:987.4px;top:493.5px;width:11.2px;height:3.0px;background:#4e4e4e;"></div>
<div style="position:absolute;left:1024.0px;top:493.5px;width:10.8px;height:3.0px;background:#4e4e4e;"></div>
<div style="position:absolute;left:1071.0px;top:493.5px;width:11.0px;height:3.0px;background:#4e4e4e;"></div>
<div style="position:absolute;left:24.0px;top:562.3px;width:1133.0px;height:1.2px;background:#555;"></div>
<div style="position:absolute;left:27.5px;top:497.8px;width:9.0px;height:3.0px;background:#5fc561;"></div>
<div style="position:absolute;left:39.0px;top:497.8px;width:9.6px;height:3.0px;background:#5b8ee8;"></div>
<div style="position:absolute;left:52.2px;top:497.8px;width:41.7px;height:3.0px;background:#5b8ee8;"></div>
<div style="position:absolute;left:37.0px;top:486.5px;width:1.8px;height:76.0px;background:#8fd0f8;"></div>
<div style="position:absolute;left:24.0px;top:462.0px;width:2.5px;height:101.0px;background:#4b8fdd;"></div>
<div style="position:absolute;left:24.8px;top:462.8px;width:6.8px;height:24.2px;background:#1d4b7e;border-radius:0 4px 4px 0;box-sizing:border-box;border:1px solid #4b8fdd;border-left:none;"></div>
<div style="position:absolute;left:26.5px;top:470.0px;width:1.5px;height:9.0px;background:#cfe3ff;"></div>
<div style="position:absolute;left:1154.5px;top:462.0px;width:2.5px;height:101.0px;background:#4b8fdd;"></div>
<div style="position:absolute;left:1149.5px;top:462.5px;width:7.5px;height:24.5px;background:#1d4b7e;border-radius:4px 0 0 4px;box-sizing:border-box;border:1px solid #4b8fdd;border-right:none;"></div>
<div style="position:absolute;left:1153.0px;top:470.0px;width:1.5px;height:9.0px;background:#cfe3ff;"></div>
<div style="position:absolute;left:24.0px;top:595.1px;width:1133.0px;height:1.6px;background:#555;"></div>
<div style="position:absolute;left:24.0px;top:623.5px;width:1133.0px;height:26.0px;background:#1f1f1f;"></div>
<div style="position:absolute;left:443.9px;top:563.0px;width:1.2px;height:153.0px;background:#555;"></div>
<div style="position:absolute;left:565.4px;top:563.0px;width:1.2px;height:153.0px;background:#555;"></div>
<div style="position:absolute;left:644.2px;top:563.0px;width:1.2px;height:153.0px;background:#555;"></div>
<div style="position:absolute;left:722.8px;top:563.0px;width:1.2px;height:153.0px;background:#555;"></div>
<div style="position:absolute;left:920.9px;top:563.0px;width:1.2px;height:153.0px;background:#555;"></div>
<span id="t67" class="t d" style="top:570.2px;font-size:15.3px;line-height:19px;color:#e3e3e3;left:31.4px;letter-spacing:0.094px;">Name</span>
<span id="t68" class="t d" style="top:570.2px;font-size:15.3px;line-height:19px;color:#e3e3e3;left:450.0px;letter-spacing:0.364px;">Status</span>
<span id="t69" class="t d" style="top:570.2px;font-size:15.3px;line-height:19px;color:#e3e3e3;left:572.3px;letter-spacing:0.175px;">Type</span>
<span id="t70" class="t d" style="top:570.2px;font-size:15.3px;line-height:19px;color:#e3e3e3;left:649.9px;letter-spacing:0.442px;">Initiator</span>
<span id="t71" class="t d" style="top:570.2px;font-size:15.3px;line-height:19px;color:#e3e3e3;left:729.5px;letter-spacing:-0.290px;">Size</span>
<span id="t72" class="t d" style="top:570.2px;font-size:15.3px;line-height:19px;color:#e3e3e3;left:927.0px;letter-spacing:-0.211px;">Time</span>
<svg style="position:absolute;left:32.0px;top:603.1px;" width="16.4" height="14.4" viewBox="0 0 16.4 14.4"><path d="M5.200 1C3.200 1 3.300 2.600 3.300 4.100 3.300 5.900 2.900 6.900 1 7.200 2.900 7.500 3.300 8.500 3.300 10.300 3.300 11.800 3.200 13.400 5.200 13.400M11.200 1C13.200 1 13.100 2.600 13.100 4.100 13.100 5.900 13.500 6.900 15.400 7.200 13.500 7.500 13.100 8.500 13.100 10.300 13.100 11.800 13.200 13.400 11.200 13.400" fill="none" stroke="#f39a66" stroke-width="2"/><circle cx="8.200" cy="4.700" r="1.350" fill="#f39a66"/><path d="M6.900 8.600H9.500V10.200L8.300 12.200H7.100L7.900 10.400H6.900Z" fill="#f39a66"/></svg>
<span id="t73" class="t d" style="top:601.3px;font-size:15.3px;line-height:19px;color:#e3e3e3;left:54.2px;letter-spacing:0.011px;">shape/?token=eyJ0eXAiOiJKV1QiLCJhbGciOiJIUzI1N...</span>
<span id="t74" class="t d" style="top:600.8px;font-size:15.7px;line-height:20px;color:#9a9a9a;left:450.1px;letter-spacing:0.607px;">200</span>
<span id="t75" class="t d" style="top:600.8px;font-size:15.6px;line-height:20px;color:#e3e3e3;left:571.7px;letter-spacing:0.446px;">fetch</span>
<div style="position:absolute;left:645.5px;top:598.8px;width:77.700px;height:24px;overflow:hidden;">
<span id="t76" class="t d" style="top:2.0px;font-size:15.7px;line-height:20px;color:#e3e3e3;left:4.8px;letter-spacing:0.473px;text-decoration:underline;text-underline-offset:2px;">index-99b</span>
</div>
<span id="t77" class="t d" style="top:601.3px;font-size:15.3px;line-height:19px;color:#9a9a9a;left:829.8px;letter-spacing:0.303px;">(disk cache)</span>
<span id="t78" class="t d" style="top:601.3px;font-size:15.3px;line-height:19px;color:#e3e3e3;left:1117.2px;letter-spacing:0.083px;">5 ms</span>
<svg style="position:absolute;left:32.0px;top:629.5px;" width="16.4" height="14.4" viewBox="0 0 16.4 14.4"><path d="M5.200 1C3.200 1 3.300 2.600 3.300 4.100 3.300 5.900 2.900 6.900 1 7.200 2.900 7.500 3.300 8.500 3.300 10.300 3.300 11.800 3.200 13.400 5.200 13.400M11.200 1C13.200 1 13.100 2.600 13.100 4.100 13.100 5.900 13.500 6.900 15.400 7.200 13.500 7.500 13.100 8.500 13.100 10.300 13.100 11.800 13.200 13.400 11.200 13.400" fill="none" stroke="#f39a66" stroke-width="2"/><circle cx="8.200" cy="4.700" r="1.350" fill="#f39a66"/><path d="M6.900 8.600H9.500V10.200L8.300 12.200H7.100L7.900 10.400H6.900Z" fill="#f39a66"/></svg>
<span id="t79" class="t d" style="top:627.7px;font-size:15.3px;line-height:19px;color:#e3e3e3;left:54.2px;letter-spacing:0.011px;">shape/?token=eyJ0eXAiOiJKV1QiLCJhbGciOiJIUzI1N...</span>
<span id="t80" class="t d" style="top:627.2px;font-size:15.7px;line-height:20px;color:#9a9a9a;left:450.1px;letter-spacing:0.607px;">200</span>
<span id="t81" class="t d" style="top:627.2px;font-size:15.6px;line-height:20px;color:#e3e3e3;left:571.7px;letter-spacing:0.446px;">fetch</span>
<div style="position:absolute;left:645.5px;top:625.2px;width:77.700px;height:24px;overflow:hidden;">
<span id="t82" class="t d" style="top:2.0px;font-size:15.7px;line-height:20px;color:#e3e3e3;left:4.8px;letter-spacing:0.473px;text-decoration:underline;text-underline-offset:2px;">index-99b</span>
</div>
<span id="t83" class="t d" style="top:627.7px;font-size:15.3px;line-height:19px;color:#9a9a9a;left:829.8px;letter-spacing:0.303px;">(disk cache)</span>
<span id="t84" class="t d" style="top:627.7px;font-size:15.3px;line-height:19px;color:#e3e3e3;left:1119.7px;letter-spacing:-0.753px;">1 ms</span>
<div style="position:absolute;left:24.0px;top:715.7px;width:1133.0px;height:1.2px;background:#555;"></div>
<span id="t85" class="t d" style="top:723.2px;font-size:15.3px;line-height:19px;color:#dcdcdc;left:37.0px;letter-spacing:0.300px;">2 / 27 requests</span>
<span id="t86" class="t d" style="top:723.2px;font-size:15.3px;line-height:19px;color:#dcdcdc;left:166.7px;letter-spacing:0.061px;">0 B / 1.1 MB transferred</span>
<span id="t87" class="t d" style="top:723.2px;font-size:15.3px;line-height:19px;color:#dcdcdc;left:354.8px;letter-spacing:0.184px;">3.9 MB / 6.2 MB resources</span>
<span id="t88" class="t d" style="top:723.2px;font-size:15.3px;line-height:19px;color:#dcdcdc;left:564.4px;letter-spacing:0.008px;">Finish: 51.79 s</span>
<span id="t89" class="t d" style="top:723.2px;font-size:15.3px;line-height:19px;color:#ef9262;left:687.9px;letter-spacing:0.318px;">DOMContentLoaded: 636 ms</span>
<span id="t90" class="t d" style="top:723.2px;font-size:15.3px;line-height:19px;color:#7fcbf7;left:918.5px;letter-spacing:0.327px;">Load: 636 ms</span>
<div style="position:absolute;left:154.0px;top:723.5px;width:1.2px;height:19.5px;background:#666;"></div>
<div style="position:absolute;left:342.4px;top:723.5px;width:1.2px;height:19.5px;background:#666;"></div>
<div style="position:absolute;left:551.9px;top:723.5px;width:1.2px;height:19.5px;background:#666;"></div>
<div style="position:absolute;left:675.6px;top:723.5px;width:1.2px;height:19.5px;background:#666;"></div>
<div style="position:absolute;left:905.7px;top:723.5px;width:1.2px;height:19.5px;background:#666;"></div>
</div></div>
<div id="rim"></div>
<svg style="position:absolute;left:0;top:0" width="1184" height="792"><ellipse cx="525" cy="405" rx="99.700" ry="74.700" fill="none" stroke="#e84026" stroke-width="10.700"/><ellipse cx="870" cy="620" rx="99.700" ry="74.700" fill="none" stroke="#e84026" stroke-width="10.700"/></svg>
</body></html>
